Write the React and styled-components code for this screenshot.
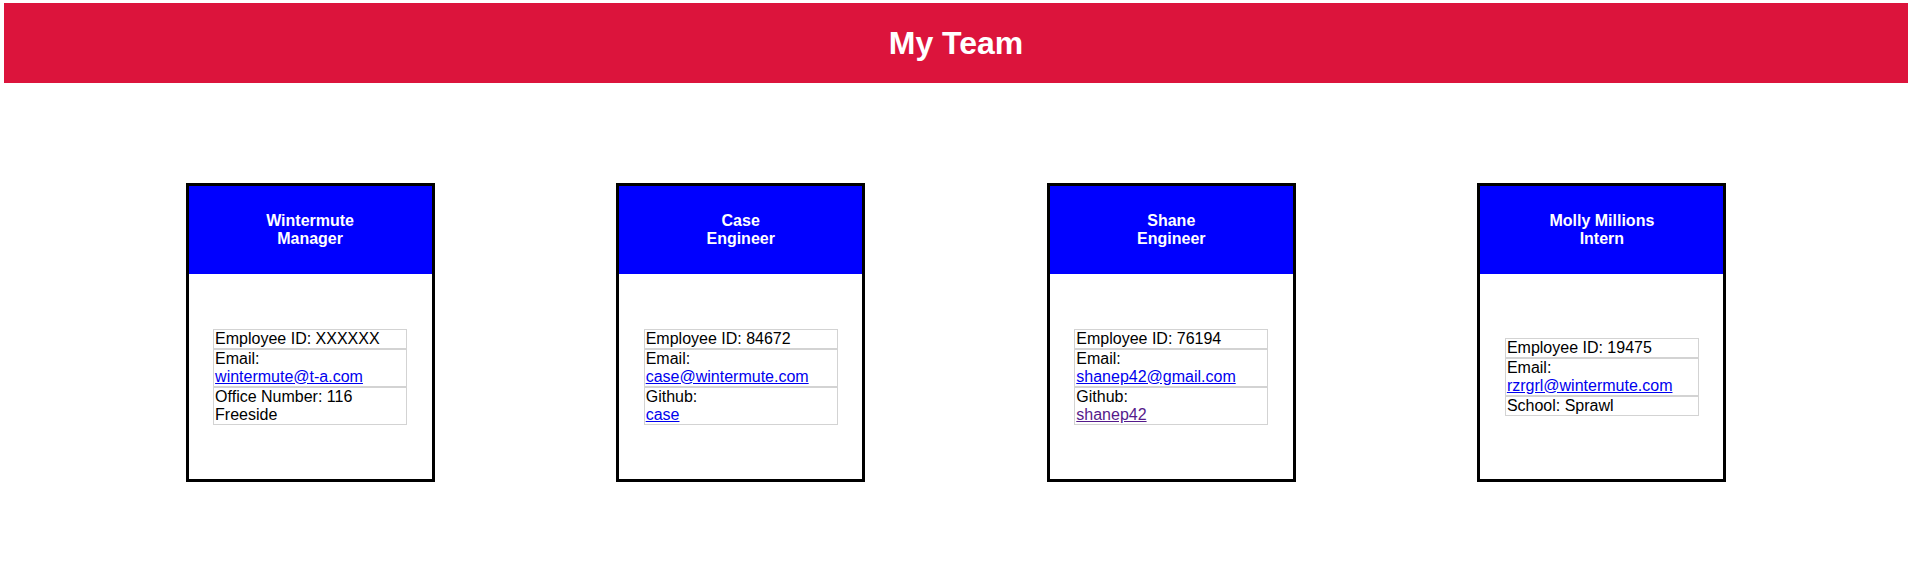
import styled, { createGlobalStyle } from 'styled-components'

const GlobalStyle = createGlobalStyle`
    body{
        margin: 0;
        font-family: "Liberation Sans", Arial, sans-serif;
        background: #ffffff;
        color: #000000;
    }
`

const Page = styled.div`
    padding: 3px 6px 0 4px;
`

const Banner = styled.header`
    height: 80px;
    background: #dc143c;
    display: flex;
    align-items: center;
    justify-content: center;
    h1{
        margin: 0;
        color: #ffffff;
        font-size: 32px;
        font-weight: 700;
    }
`

const CardRow = styled.main`
    display: flex;
    justify-content: space-evenly;
    margin-top: 100px;
`

const Card = styled.div`
    width: 249px;
    height: 299px;
    box-sizing: border-box;
    border: 3px solid #000000;
    display: flex;
    flex-direction: column;
`

const CardHead = styled.div`
    height: 88px;
    flex-shrink: 0;
    background: #0000ff;
    color: #ffffff;
    font-weight: 700;
    font-size: 16px;
    line-height: 18px;
    display: flex;
    flex-direction: column;
    align-items: center;
    justify-content: center;
    text-align: center;
`

const CardBody = styled.div`
    flex: 1;
    display: flex;
    align-items: center;
    justify-content: center;
`

const InfoList = styled.ul`
    list-style: none;
    margin: 0;
    padding: 0;
    width: 194px;
    font-size: 16px;
    line-height: 18px;
`

const InfoItem = styled.li`
    border: 1px solid #d3d3d3;
    padding: 0 1px;
`

const InfoLink = styled.a`
    display: block;
    width: fit-content;
    color: ${props => props.$visited ? '#551a8b' : '#0000ee'};
    text-decoration: underline;
`

const team = [
    {
        name: 'Wintermute', role: 'Manager', id: 'XXXXXX', email: 'wintermute@t-a.com',
        extra: { label: 'Office Number', value: '116 Freeside' }
    },
    {
        name: 'Case', role: 'Engineer', id: '84672', email: 'case@wintermute.com',
        github: 'case'
    },
    {
        name: 'Shane', role: 'Engineer', id: '76194', email: 'shanep42@gmail.com',
        github: 'shanep42', visited: true
    },
    {
        name: 'Molly Millions', role: 'Intern', id: '19475', email: 'rzrgrl@wintermute.com',
        extra: { label: 'School', value: 'Sprawl' }
    },
]

function MemberCard({ name, role, id, email, github, extra, visited }) {
    return (
        <Card>
            <CardHead>
                <span>{name}</span>
                <span>{role}</span>
            </CardHead>
            <CardBody>
                <InfoList>
                    <InfoItem>Employee ID: {id}</InfoItem>
                    <InfoItem>
                        Email:
                        <InfoLink href={`mailto:${email}`}>{email}</InfoLink>
                    </InfoItem>
                    {github ? (
                        <InfoItem>
                            Github:
                            <InfoLink href={`#${github}`} $visited={visited}>{github}</InfoLink>
                        </InfoItem>
                    ) : (
                        <InfoItem>{extra.label}: {extra.value}</InfoItem>
                    )}
                </InfoList>
            </CardBody>
        </Card>
    )
}

export default function App() {
    return (
        <>
            <GlobalStyle />
            <Page>
                <Banner>
                    <h1>My Team</h1>
                </Banner>
                <CardRow>
                    {team.map(member => (
                        <MemberCard key={member.id} {...member} />
                    ))}
                </CardRow>
            </Page>
        </>
    )
}
